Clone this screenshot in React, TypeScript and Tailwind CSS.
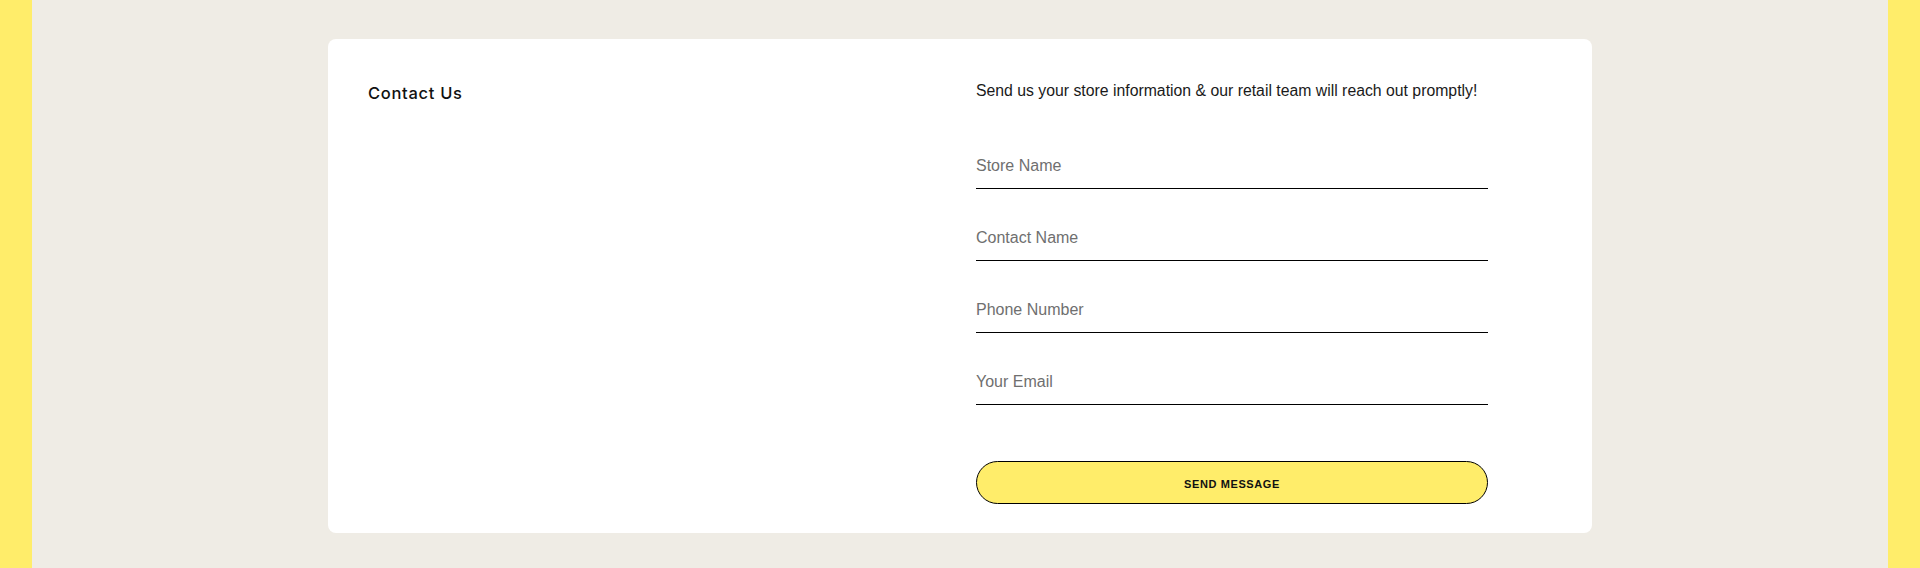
import React from "react";

const fields = ["Store Name", "Contact Name", "Phone Number", "Your Email"];

const App: React.FC = () => {
  return (
    <div
      className="bg-[#FFED6A] px-8"
      style={{ fontFamily: '"Liberation Sans", Arial, sans-serif' }}
    >
      <div className="h-[568px] bg-[#EFECE5] pt-[39px]">
        <div className="mx-auto grid w-[1264px] grid-cols-2 gap-8 rounded-lg bg-white px-10 pb-[29px] pt-[39px]">
          <div>
            <h2 className="pt-[1px] font-['Inter',sans-serif] text-[16.5px] font-medium leading-7 tracking-[0.7px] text-[#111]">
              Contact Us
            </h2>
          </div>

          <form
            className="w-[512px]"
            onSubmit={(e) => {
              e.preventDefault();
            }}
          >
            <p className="pt-[1px] text-[15.8px] leading-6 text-[#1a1a1a]">
              Send us your store information &amp; our retail team will reach out promptly!
            </p>

            <div className="mt-[40px] flex flex-col gap-[26px]">
              {fields.map((field) => (
                <input
                  key={field}
                  type="text"
                  placeholder={field}
                  className="h-[46px] w-full border-b border-black bg-transparent text-[16px] text-[#111] outline-none placeholder:text-[#6f6f6f]"
                />
              ))}
            </div>

            <button
              type="submit"
              className="mt-[56px] h-[43px] w-full rounded-full border border-black bg-[#FFED6A] pt-[3px] text-[11px] font-bold uppercase tracking-[0.6px] text-[#111]"
            >
              Send Message
            </button>
          </form>
        </div>
      </div>
    </div>
  );
};

export default App;
